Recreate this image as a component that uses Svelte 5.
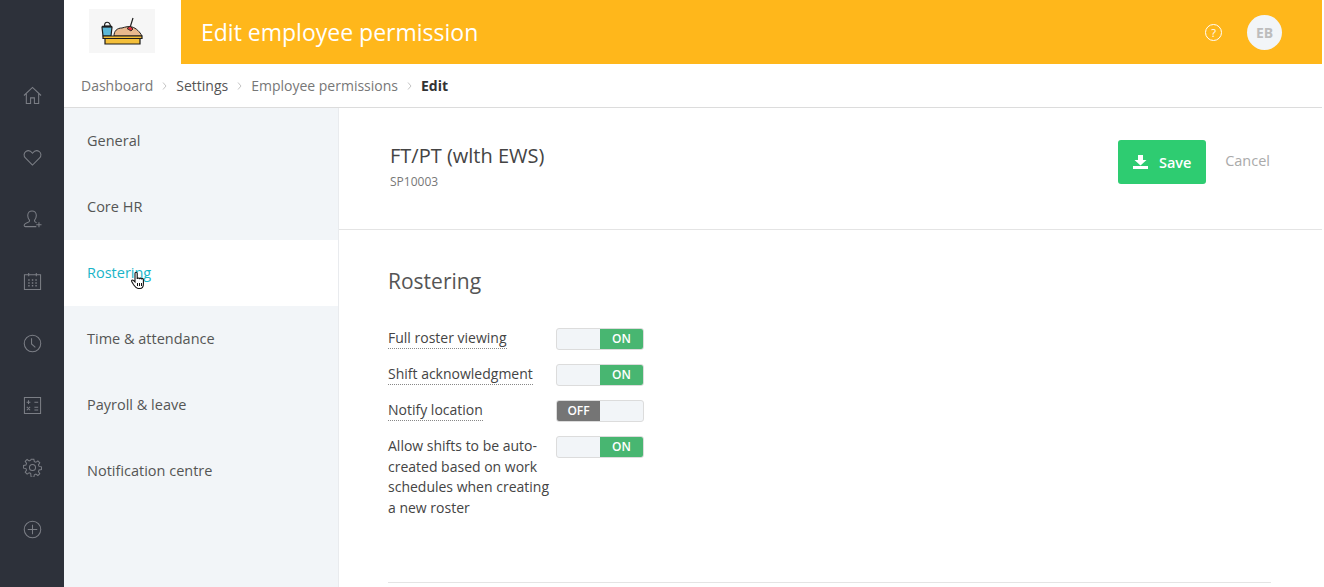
<script>
  const crumbs = ['Dashboard', 'Settings', 'Employee permissions'];
  const menu = ['General', 'Core HR', 'Rostering', 'Time & attendance', 'Payroll & leave', 'Notification centre'];
  const toggles = [
    { label: 'Full roster viewing', on: true, hint: true },
    { label: 'Shift acknowledgment', on: true, hint: true },
    { label: 'Notify location', on: false, hint: true },
    { label: 'Allow shifts to be auto-created based on work schedules when creating a new roster', on: true, hint: false }
  ];
</script>

<div class="page">
  <nav class="rail">
    <svg viewBox="0 0 20 20"><path d="M1 10 10 1.5 19 10M3.5 8v10.500h4.500v-6h4v6h4.500V8" /></svg>
    <svg viewBox="0 0 20 20"><path d="M10 18 2.500 10.500C.5 8.500.8 5.300 2.800 3.800c2.200-1.600 5.200-1 7.200 1.700 2-2.700 5-3.300 7.200-1.700 2 1.500 2.300 4.700.3 6.700Z" /></svg>
    <svg viewBox="0 0 20 20"><path d="M14 17.500H2.500c-1.500 0-1.600-1.800-.6-2.700 1.400-1.200 3.500-1.400 4.600-2.500.6-.7.500-1.500 0-2.100C5.600 9 5 7.500 5 5.800 5 3 7 1 9.500 1S14 3 14 5.800c0 1.700-.6 3.200-1.500 4.400-.5.600-.6 1.400 0 2.100.5.500 1.100.8 1.800 1.100M14 15.500h5.500M16.800 12.800v5.400" /></svg>
    <svg viewBox="0 0 20 20"><path d="M1.500 3h17v15.500h-17ZM6 1v3.500M14 1v3.500" /><path class="dots" d="M5.500 8.500h1.500M9.300 8.500h1.500M13 8.500h1.500M5.500 11.500h1.500M9.300 11.500h1.500M13 11.500h1.500M5.500 14.500h1.500M9.300 14.500h1.500M13 14.500h1.500" /></svg>
    <svg viewBox="0 0 20 20"><circle cx="10" cy="10" r="8.700" /><path d="M9 4.500V10.500L13 14" /></svg>
    <svg viewBox="0 0 20 20"><path d="M1.500 1.500h17v17h-17ZM3.800 6.500h4M5.800 4.500v4M12 6.500h4M4 11.500l3.500 3.500M7.500 11.500 4 15M12 11.800h4M12 14.800h4" /></svg>
    <svg viewBox="0 0 20 20"><circle cx="10" cy="10" r="3.200" /><path d="M8.500 1h3l.5 2.600 1.700.7 2.200-1.500 2.100 2.100-1.500 2.200.7 1.700 2.600.5v3l-2.600.5-.7 1.700 1.500 2.200-2.100 2.100-2.200-1.500-1.700.7-.5 2.600h-3L8 16.400l-1.700-.7-2.200 1.500L2 15.100l1.500-2.200-.7-1.700L.2 10.700v-3l2.600-.5.700-1.700L2 3.300 4.100 1.200l2.200 1.500L8 2Z" transform="translate(.4 .4) scale(.96)" /></svg>
    <svg viewBox="0 0 20 20"><circle cx="10" cy="10" r="8.700" /><path d="M10 5v10M5 10h10" /></svg>
  </nav>

  <div class="main">
    <header class="top">
      <div class="logo">
        <svg viewBox="0 0 66 44" width="66" height="44">
          <path d="M14 27 13 18h10l-1 9Z" fill="#5bb8d8" stroke="#1c1c1c" stroke-width="1.200" />
          <path d="M15.500 17c0-5 5-5 6 0Z" fill="#f4f4f4" stroke="#1c1c1c" stroke-width="1.200" />
          <path d="M13 17.500h10" stroke="#1c1c1c" stroke-width="1.500" />
          <path d="M25 27c0-5 3-8 8-8 3-1 7-2 10-1 4 1 8 5 10 9Z" fill="#e8b98e" stroke="#1c1c1c" stroke-width="1" />
          <path d="M38 19.500l3-2.500 3 3-2 2Z" fill="#d8323c" stroke="#1c1c1c" stroke-width=".8" />
          <path d="M41.500 17 44 9" stroke="#1c1c1c" stroke-width="1.200" />
          <path d="M14 27h39v2.500H14Z" fill="#f4bf3a" stroke="#1c1c1c" stroke-width="1.200" />
          <path d="M16 29.500h35v5.500H16Z" fill="#f4bf3a" stroke="#1c1c1c" stroke-width="1.200" />
        </svg>
      </div>
      <div class="bar">
        <h1>Edit employee permission</h1>
        <div class="bar-right">
          <span class="help">?</span>
          <span class="avatar">EB</span>
        </div>
      </div>
    </header>

    <div class="crumbs">
      {#each crumbs as c, i}
        <span class={i === 1 ? 'crumb mid' : 'crumb'}>{c}</span>
        <svg class="sep" viewBox="0 0 5 8" width="5" height="8"><path d="M1 .5 4 4 1 7.500" /></svg>
      {/each}
      <strong>Edit</strong>
    </div>

    <div class="body">
      <aside class="side">
        {#each menu as item}
          <div class={item === 'Rostering' ? 'item active' : 'item'}>
            {item}
            {#if item === 'Rostering'}
              <svg class="cursor" viewBox="0 0 16 19" width="16" height="19">
                <path d="M5 11V2.500c0-1.600 2.200-1.600 2.200 0V8c.2-1.300 2-1.300 2.200 0 .3-1.200 2-1.100 2.100.2.400-1 1.900-.8 1.900.5v4.300c0 2.500-1.400 4.500-3.500 4.500H8c-2 0-3-2-4.500-4L1.800 10.800c-.8-1.200.6-2.400 1.600-1.400Z" fill="#fff" stroke="#111" stroke-width="1.100" />
                <path d="M7.500 12v3M9.500 12v3M11.500 12v3" stroke="#111" fill="none" />
              </svg>
            {/if}
          </div>
        {/each}
      </aside>

      <section class="content">
        <div class="head">
          <div>
            <h2>FT/PT (wlth EWS)</h2>
            <p>SP10003</p>
          </div>
          <div class="actions">
            <button class="save">
              <svg viewBox="0 0 15 14" width="15" height="14"><path d="M5 0h5v5h3.500L7.500 10.500 1.500 5H5ZM0 11h15v3H0Z" fill="#fff" /></svg>
              Save
            </button>
            <span class="cancel">Cancel</span>
          </div>
        </div>

        <div class="section">
          <h3>Rostering</h3>
          <div class="rows">
            {#each toggles as t}
              <div class="row">
                <div class="label"><span class={t.hint ? 'hint' : ''}>{t.label}</span></div>
                <div class={t.on ? 'toggle on' : 'toggle off'}>
                  {#if t.on}
                    <span class="blank"></span><span class="state">ON</span>
                  {:else}
                    <span class="state">OFF</span><span class="blank"></span>
                  {/if}
                </div>
              </div>
            {/each}
          </div>
          <hr />
        </div>
      </section>
    </div>
  </div>
  <div class="edge"></div>
</div>

<style>
  :global(body) {
    margin: 0;
    background: #fff;
    font-family: "Open Sans", sans-serif;
    overflow: hidden;
  }

  .page {
    display: flex;
    height: 587px;
    overflow: hidden;
  }

  .rail {
    flex: 0 0 64px;
    background: #2d313a;
    display: flex;
    flex-direction: column;
    align-items: center;
    gap: 43px;
    padding-top: 86px;
    box-sizing: border-box;
  }

  .rail svg {
    width: 19px;
    height: 19px;
    fill: none;
    stroke: #7b7e85;
    stroke-width: 1.100;
    margin-left: 0;
  }

  .rail .dots {
    stroke-width: 1.500;
  }

  .main {
    flex: 1;
    min-width: 0;
  }

  .top {
    display: flex;
    height: 64px;
  }

  .logo {
    flex: 0 0 117px;
    padding: 9px 0 0 25px;
    box-sizing: border-box;
  }

  .logo svg {
    display: block;
    background: #f6f6f6;
  }

  .bar {
    flex: 1;
    background: #ffb71b;
    display: flex;
    align-items: center;
    justify-content: space-between;
    padding: 0 40px 0 20px;
  }

  h1 {
    margin: 0;
    color: #fff;
    font-size: 23px;
    font-weight: 400;
  }

  .bar-right {
    display: flex;
    align-items: center;
    gap: 25px;
  }

  .help {
    width: 15px;
    height: 15px;
    border: 1px solid #fff;
    border-radius: 50%;
    color: #fff;
    font-size: 11px;
    line-height: 15px;
    text-align: center;
    margin-top: 1px;
  }

  .avatar {
    width: 35px;
    height: 35px;
    border-radius: 50%;
    background: #f2f5f8;
    color: #bdbdbd;
    font-size: 14px;
    font-weight: 700;
    line-height: 35px;
    text-align: center;
  }

  .crumbs {
    height: 43px;
    border-bottom: 1px solid #dcdcdc;
    display: flex;
    align-items: center;
    padding-left: 17px;
    font-size: 14px;
    color: #777;
    box-sizing: content-box;
  }

  .crumb.mid {
    color: #555;
  }

  .sep {
    margin: 0 9px;
    fill: none;
    stroke: #c4c4c4;
  }

  .crumbs strong {
    color: #333;
    font-weight: 700;
  }

  .body {
    display: flex;
    height: 479px;
  }

  .side {
    flex: 0 0 274px;
    background: #f2f5f8;
    border-right: 1px solid #e9ebee;
  }

  .item {
    position: relative;
    height: 66px;
    line-height: 66px;
    padding-left: 23px;
    font-size: 14.500px;
    color: #555;
  }

  .item.active {
    background: #fff;
    color: #19b5c8;
  }

  .cursor {
    position: absolute;
    left: 66px;
    top: 31px;
  }

  .content {
    flex: 1;
    min-width: 0;
  }

  .head {
    height: 121px;
    border-bottom: 1px solid #e4e4e4;
    display: flex;
    justify-content: space-between;
    padding: 32px 52px 0 51px;
    box-sizing: content-box;
    height: 89px;
  }

  h2 {
    margin: 0;
    font-size: 20px;
    font-weight: 400;
    color: #444;
    line-height: 32px;
  }

  .head p {
    margin: 1px 0 0;
    font-size: 12px;
    color: #777;
  }

  .actions {
    display: flex;
    align-items: flex-start;
  }

  .save {
    width: 88px;
    height: 44px;
    background: #2ecc71;
    border: 0;
    border-radius: 3px;
    color: #fff;
    font: 600 14.500px "Open Sans", sans-serif;
    display: flex;
    align-items: center;
    justify-content: center;
    gap: 11px;
  }

  .cancel {
    margin: 11px 0 0 19px;
    font-size: 14.500px;
    color: #aaa;
  }

  .section {
    padding: 35px 51px 0 49px;
  }

  h3 {
    margin: 0 0 31px;
    font-size: 21px;
    font-weight: 400;
    color: #555;
    line-height: 32px;
  }

  .rows {
    display: flex;
    flex-direction: column;
    gap: 14px;
  }

  .row {
    display: flex;
    gap: 3px;
  }

  .label {
    width: 165px;
    font-size: 14px;
    line-height: 20.500px;
    color: #444;
  }

  .hint {
    border-bottom: 1px dotted #888;
    padding-bottom: 1px;
  }

  .toggle {
    width: 86px;
    height: 20px;
    border: 1px solid #dcdcdc;
    border-radius: 3px;
    display: flex;
    overflow: hidden;
    background: #f2f5f8;
    font-size: 12px;
    font-weight: 600;
    line-height: 20px;
    color: #fff;
    text-align: center;
  }

  .blank, .state {
    flex: 0 0 43px;
  }

  .on .state {
    background: #48b671;
  }

  .off .state {
    background: #757575;
  }

  hr {
    border: 0;
    border-top: 1px solid #e4e4e4;
    margin: 64px 0 0;
  }

  .edge {
    flex: 0 0 2px;
    background: #fff;
  }
</style>
